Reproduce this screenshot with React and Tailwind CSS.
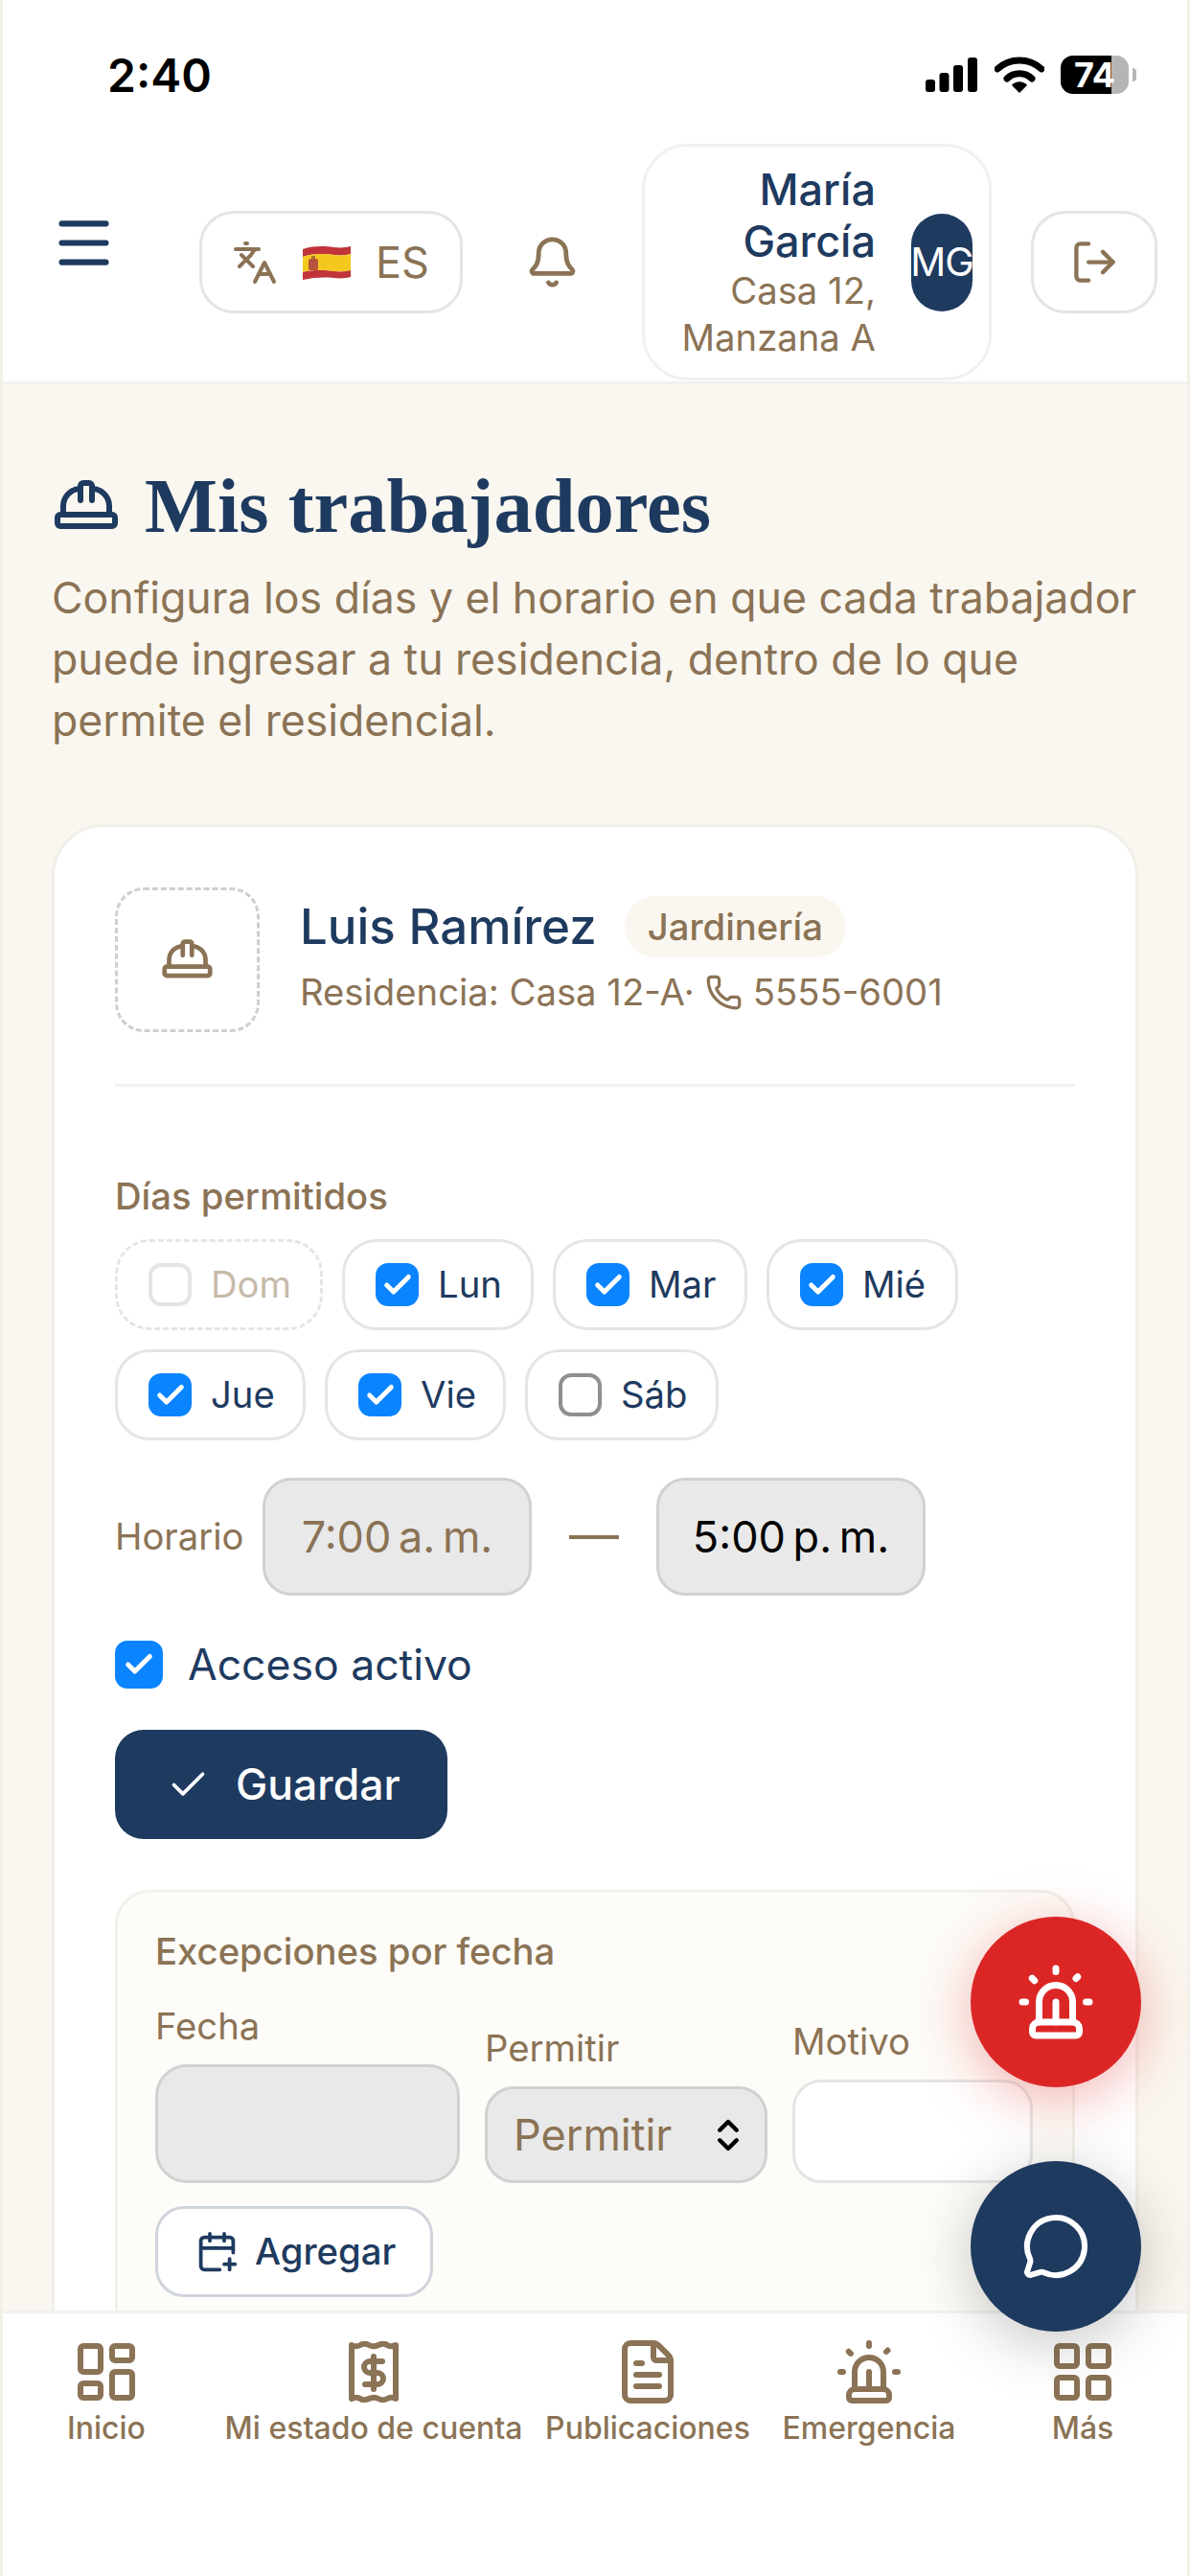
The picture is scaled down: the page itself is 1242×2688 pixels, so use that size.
import { Menu, Languages, Bell, LogOut, HardHat, Phone, Check, CalendarPlus, Siren, MessageCircle, LayoutDashboard, FileText, LayoutGrid, ChevronsUpDown } from "lucide-react";

const DAYS_ROW_1 = [
  { label: "Mar", on: true, w: "w-[203px]" },
  { label: "Mié", on: true, w: "w-[200px]" },
];
const DAYS_ROW_2 = [
  { label: "Jue", on: true, w: "w-[199px]" },
  { label: "Vie", on: true, w: "w-[189px]" },
];

const SpainFlag = () => (
  <svg width="50" height="36" viewBox="0 0 50 36" className="shrink-0">
    <path d="M0 4 C12 0 24 1 32 2 C40 3 46 2 50 1 V9 C46 10 40 11 32 10 C24 9 12 8 0 12 Z" fill="#c0343a" />
    <path d="M0 12 C12 8 24 9 32 10 C40 11 46 10 50 9 V26 C46 27 40 28 32 27 C24 26 12 25 0 28 Z" fill="#f4c81f" />
    <path d="M0 28 C12 25 24 26 32 27 C40 28 46 27 50 26 V33 C46 34 40 35 32 34 C24 33 12 33 0 36 Z" fill="#c0343a" />
    <rect x="6" y="14" width="10" height="12" rx="2" fill="#b5533c" />
    <rect x="9" y="11" width="4" height="3" fill="#a8792a" />
  </svg>
);

const SignalIcon = () => (
  <svg width="54" height="36" viewBox="0 0 54 36">
    <rect x="0" y="23" width="10" height="13" rx="3" fill="#000" />
    <rect x="14.500" y="16" width="10" height="20" rx="3" fill="#000" />
    <rect x="29" y="8" width="10" height="28" rx="3" fill="#000" />
    <rect x="44" y="0" width="10" height="36" rx="3" fill="#000" />
  </svg>
);

const WifiIcon = () => (
  <svg width="52" height="38" viewBox="0 0 52 38" fill="none">
    <path d="M3 13 C16 1 36 1 49 13" stroke="#000" strokeWidth="7" strokeLinecap="round" />
    <path d="M13 23 C20 16 32 16 39 23" stroke="#000" strokeWidth="7" strokeLinecap="round" />
    <path d="M18 30 C22 25 30 25 34 30 L26 38 Z" fill="#000" />
  </svg>
);

const ReceiptDollar = () => (
  <svg width="54" height="64" viewBox="0 0 54 64" fill="none" stroke="#8b7355" strokeWidth="6" strokeLinejoin="round" strokeLinecap="round">
    <path d="M4 4 Q8.500 6.500 13 4 T22 4 T32 4 T41 4 T50 4 V60 Q45.500 57.500 41 60 T32 60 T22 60 T13 60 T4 60 Z" />
    <path d="M36 21 H23 a6 6 0 0 0 0 12 H31 a6 6 0 0 1 0 12 H18" />
    <path d="M27 16 V50" />
  </svg>
);

const Box = ({ on, disabled, size = "w-[45px] h-[45px]" }) => (
  <span
    className={
      size +
      " shrink-0 rounded-[13px] flex items-center justify-center " +
      (on ? "bg-[#0a84ff]" : disabled ? "bg-white border-[4px] border-[#e4e4e4]" : "bg-white border-[4px] border-[#8e8e93]")
    }
  >
    {on && <Check size={34} color="#fff" strokeWidth={3.5} />}
  </span>
);

const DayChip = ({ label, on, w }) => (
  <div className={w + " h-[95px] flex items-center gap-[20px] pl-[32px] bg-white border-[3px] border-[#e5e5e5] rounded-[36px]"}>
    <Box on={on} />
    <span className="text-[38.25px] text-[#1e3a5f]">{label}</span>
  </div>
);

const NavItem = ({ w, label, children }) => (
  <div className={w + " flex flex-col items-center"}>
    <div className="h-[66px] flex items-center justify-center">{children}</div>
    <span className="mt-[4px] text-[32px] leading-[44px] font-medium text-[#8b7355] whitespace-nowrap">{label}</span>
  </div>
);

export default function App() {
  return (
    <div className="relative w-[1242px] h-[2688px] overflow-hidden flex flex-col border-x-[3px] border-[#f3f0e8] bg-[#faf7f0] font-[Inter,sans-serif]">
      {/* barra de estado + header */}
      <header className="bg-white border-b-[3px] border-[#f1f1f1] h-[401px] shrink-0">
        <div className="h-[150px] flex justify-between items-start pl-[109px] pr-[53px]">
          <span className="mt-[49px] text-[48px] leading-[60px] font-semibold text-black">2:40</span>
          <div className="mt-[58px] flex items-center">
            <SignalIcon />
            <div className="ml-[18px]"><WifiIcon /></div>
            <div className="ml-[17px] relative w-[71px] h-[40px] rounded-[13px] bg-[#b5b5b5]">
              <div className="w-[53px] h-full rounded-l-[13px] bg-black" />
              <span className="absolute left-[14px] top-0 text-[36px] leading-[40px] font-bold text-white">74</span>
            </div>
            <div className="ml-[4px] w-[4px] h-[14px] rounded-r-full bg-[#b5b5b5]" />
          </div>
        </div>
        <div className="flex items-center pl-[50px]">
          <Menu size={69} color="#1e3a5f" strokeWidth={2.1} className="-mt-[40px]" />
          <div className="ml-[86px] w-[275px] h-[107px] flex items-center pl-[31px] bg-white border-[3px] border-[#e5e5e5] rounded-[36px]">
            <Languages size={48} color="#8b7355" strokeWidth={2} />
            <div className="ml-[26px]"><SpainFlag /></div>
            <span className="ml-[26px] text-[45px] text-[#8b7355]">ES</span>
          </div>
          <Bell size={57} color="#8b7355" strokeWidth={2} className="ml-[65px]" />
          <div className="ml-[65px] w-[365px] h-[247px] flex items-center justify-end pr-[17px] gap-[37px] border-[3px] border-[#f1f1f1] rounded-[48px] bg-white">
            <div className="w-[230px] text-right">
              <div className="text-[45px] leading-[54px] font-medium text-[#1e3a5f]">María García</div>
              <div className="text-[38.25px] leading-[49px] text-[#8b7355]">Casa 12, Manzana A</div>
            </div>
            <div className="w-[64px] h-[102px] shrink-0 rounded-full bg-[#1e3a5f] flex items-center justify-center text-[41px] text-white tracking-tight">MG</div>
          </div>
          <div className="ml-[41px] w-[132px] h-[107px] flex items-center justify-center bg-white border-[3px] border-[#e5e5e5] rounded-[36px]">
            <LogOut size={51} color="#8b7355" strokeWidth={2} />
          </div>
        </div>
      </header>

      <main className="flex-1 overflow-hidden px-[51px] pt-[82px]">
        <div className="flex items-center gap-[25px]">
          <HardHat size={72} color="#1e3a5f" strokeWidth={2} className="shrink-0" />
          <h1 className="font-['Liberation_Serif',serif] font-bold text-[80.5px] leading-[90px] text-[#1e3a5f]">Mis trabajadores</h1>
        </div>
        <p className="mt-[20px] text-[44.6px] leading-[63.75px] text-[#8b7355]">
          Configura los días y el horario en que cada trabajador puede ingresar a tu residencia, dentro de lo que permite el residencial.
        </p>

        <section className="mt-[76px] bg-white border-[3px] border-[#f1efe9] rounded-[54px] px-[63px] pt-[63px]">
          <div className="flex items-center gap-[42px] pb-[54px] border-b-[3px] border-[#f2f2f2]">
            <div className="w-[151px] h-[151px] shrink-0 flex items-center justify-center border-[3px] border-dashed border-[#cfcfcf] rounded-[30px]">
              <HardHat size={57} color="#8b7355" strokeWidth={2} />
            </div>
            <div className="-mt-[6px]">
              <div className="flex items-center gap-[29px]">
                <span className="text-[51px] leading-[64px] font-medium text-[#1e3a5f]">Luis Ramírez</span>
                <span className="h-[64px] px-[24px] flex items-center rounded-full bg-[#faf7f0] text-[38.25px] font-medium text-[#8b7355]">Jardinería</span>
              </div>
              <div className="mt-[9px] flex items-center text-[38.25px] leading-[54px] text-[#8b7355]">
                <span>Residencia: Casa 12-A·</span>
                <Phone size={39} color="#8b7355" strokeWidth={2} className="ml-[11px]" />
                <span className="ml-[11px]">5555-6001</span>
              </div>
            </div>
          </div>

          <div className="mt-[90px] text-[38.25px] leading-[48px] font-medium text-[#8b7355]">Días permitidos</div>
          <div className="mt-[21px] flex gap-[20px]">
            <div className="w-[217px] h-[95px] flex items-center gap-[20px] pl-[32px] border-[3px] border-dashed border-[#e5e5e5] rounded-[36px]">
              <Box disabled />
              <span className="text-[38.25px] text-[#c6baa9]">Dom</span>
            </div>
            <DayChip label="Lun" on w="w-[200px]" />
            {DAYS_ROW_1.map((d) => <DayChip key={d.label} {...d} />)}
          </div>
          <div className="mt-[20px] flex gap-[20px]">
            {DAYS_ROW_2.map((d) => <DayChip key={d.label} {...d} />)}
            <DayChip label="Sáb" on={false} w="w-[202px]" />
          </div>

          <div className="mt-[39px] flex items-center">
            <span className="w-[154px] text-[38.25px] text-[#8b7355]">Horario</span>
            <div className="w-[281px] h-[123px] flex items-center justify-center bg-[#e9e9e9] border-[3px] border-[#d1d1d1] rounded-[30px] text-[45px] [word-spacing:-5px] text-[#8b7355]">7:00 a. m.</div>
            <div className="ml-[39px] w-[52px] h-[4px] bg-[#8b7355]" />
            <div className="ml-[39px] w-[281px] h-[123px] flex items-center justify-center bg-[#e9e9e9] border-[3px] border-[#d1d1d1] rounded-[30px] text-[45px] [word-spacing:-5px] text-black">5:00 p. m.</div>
          </div>

          <div className="mt-[45px] flex items-center gap-[26px]">
            <Box on size="w-[50px] h-[50px]" />
            <span className="text-[44.500px] leading-[54px] text-[#1e3a5f]">Acceso activo</span>
          </div>

          <button className="mt-[41px] w-[347px] h-[114px] flex items-center pl-[54px] gap-[27px] rounded-[30px] bg-[#1e3a5f] text-white">
            <Check size={45} color="#fff" strokeWidth={2} />
            <span className="text-[44.500px] font-medium">Guardar</span>
          </button>

          <div className="mt-[53px] h-[600px] bg-[#fdfcf8] border-[3px] border-[#f2f0ea] rounded-[36px] px-[39px] pt-[37px]">
            <div className="text-[38.25px] leading-[48px] font-medium text-[#8b7355]">Excepciones por fecha</div>
            <div className="mt-[30px] flex items-end gap-[26px]">
              <div className="w-[318px]">
                <div className="text-[38.25px] leading-[48px] text-[#8b7355]">Fecha</div>
                <input className="mt-[16px] block w-full h-[124px] bg-[#e9e9e9] border-[3px] border-[#d1d1d1] rounded-[33px]" />
              </div>
              <div className="w-[295px]">
                <div className="text-[38.25px] leading-[48px] text-[#8b7355]">Permitir</div>
                <div className="mt-[16px] h-[101px] flex items-center justify-between pl-[27px] pr-[17px] bg-[#e9e9e9] border-[3px] border-[#d1d1d1] rounded-[30px]">
                  <span className="text-[45px] text-[#8b7355]">Permitir</span>
                  <ChevronsUpDown size={42} color="#000" strokeWidth={2.5} />
                </div>
              </div>
              <div className="w-[251px]">
                <div className="text-[38.25px] leading-[48px] text-[#8b7355]">Motivo</div>
                <input className="mt-[16px] block w-full h-[108px] bg-white border-[3px] border-[#e5e5e5] rounded-[30px]" />
              </div>
            </div>
            <button className="mt-[24px] w-[290px] h-[95px] flex items-center pl-[39px] gap-[17px] bg-white border-[3px] border-[#d0d5dd] rounded-[30px]">
              <CalendarPlus size={45} color="#1e3a5f" strokeWidth={2} />
              <span className="text-[38.25px] font-medium text-[#1e3a5f]">Agregar</span>
            </button>
          </div>
        </section>
      </main>

      <nav className="relative z-10 h-[277px] shrink-0 bg-white border-t-[3px] border-[#f1f1f1] pt-[28px] flex">
        <NavItem w="w-[216px]" label="Inicio"><LayoutDashboard size={72} color="#8b7355" strokeWidth={2} /></NavItem>
        <NavItem w="w-[342px]" label="Mi estado de cuenta"><ReceiptDollar /></NavItem>
        <NavItem w="w-[230px]" label="Publicaciones"><FileText size={72} color="#8b7355" strokeWidth={2} /></NavItem>
        <NavItem w="w-[232px]" label="Emergencia"><Siren size={72} color="#8b7355" strokeWidth={2} /></NavItem>
        <NavItem w="w-[214px]" label="Más"><LayoutGrid size={72} color="#8b7355" strokeWidth={2} /></NavItem>
      </nav>

      {/* botones flotantes */}
      <button className="absolute z-20 left-[1010px] top-[2000px] w-[178px] h-[178px] rounded-full bg-[#dc2626] flex items-center justify-center shadow-[0_12px_60px_rgba(220,38,38,0.35)]">
        <Siren size={84} color="#fff" strokeWidth={2} />
      </button>
      <button className="absolute z-20 left-[1010px] top-[2255px] w-[178px] h-[178px] rounded-full bg-[#1e3a5f] flex items-center justify-center shadow-[0_12px_60px_rgba(30,30,30,0.25)]">
        <MessageCircle size={72} color="#fff" strokeWidth={2} />
      </button>
    </div>
  );
}
